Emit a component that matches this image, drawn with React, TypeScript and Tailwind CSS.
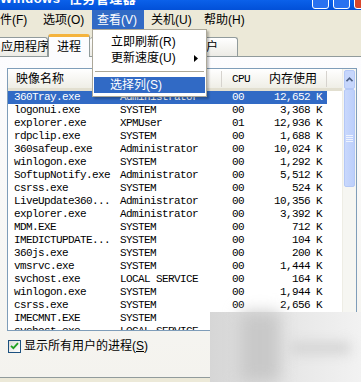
import React from 'react';

type Row = { name: string; user: string; cpu: string; mem: string };

const rows: Row[] = [
  { name: '360Tray.exe', user: 'Administrator', cpu: '00', mem: '12,652 K' },
  { name: 'logonui.exe', user: 'SYSTEM', cpu: '00', mem: '3,368 K' },
  { name: 'explorer.exe', user: 'XPMUser', cpu: '01', mem: '12,936 K' },
  { name: 'rdpclip.exe', user: 'SYSTEM', cpu: '00', mem: '1,688 K' },
  { name: '360safeup.exe', user: 'Administrator', cpu: '00', mem: '10,024 K' },
  { name: 'winlogon.exe', user: 'SYSTEM', cpu: '00', mem: '1,292 K' },
  { name: 'SoftupNotify.exe', user: 'Administrator', cpu: '00', mem: '5,512 K' },
  { name: 'csrss.exe', user: 'SYSTEM', cpu: '00', mem: '524 K' },
  { name: 'LiveUpdate360...', user: 'Administrator', cpu: '00', mem: '10,356 K' },
  { name: 'explorer.exe', user: 'Administrator', cpu: '00', mem: '3,392 K' },
  { name: 'MDM.EXE', user: 'SYSTEM', cpu: '00', mem: '712 K' },
  { name: 'IMEDICTUPDATE...', user: 'SYSTEM', cpu: '00', mem: '104 K' },
  { name: '360js.exe', user: 'SYSTEM', cpu: '00', mem: '200 K' },
  { name: 'vmsrvc.exe', user: 'SYSTEM', cpu: '00', mem: '1,444 K' },
  { name: 'svchost.exe', user: 'LOCAL SERVICE', cpu: '00', mem: '164 K' },
  { name: 'winlogon.exe', user: 'SYSTEM', cpu: '00', mem: '1,944 K' },
  { name: 'csrss.exe', user: 'SYSTEM', cpu: '00', mem: '2,656 K' },
  { name: 'IMECMNT.EXE', user: 'SYSTEM', cpu: '00', mem: '1,108 K' },
  { name: 'svchost.exe', user: 'LOCAL SERVICE', cpu: '00', mem: '3,204 K' },
];

const ui = "font-['Liberation_Sans','Noto_Sans_CJK_SC',sans-serif]";
const mono = "font-['Liberation_Mono','Noto_Sans_CJK_SC',monospace] text-[11px] tracking-[-0.6px]";

export default function App() {
  return (
    <div className={`relative w-[361px] h-[382px] overflow-hidden bg-[#ece9d8] text-[12px] text-black ${ui}`}>
      {/* title bar, only its lower edge is in frame */}
      <div className="h-[10px] overflow-hidden bg-gradient-to-b from-[#0b61ea] to-[#0250d8]">
        <div className="flex items-center justify-between h-[24px] -mt-[13px]">
          <span className="text-white font-bold text-[13px] tracking-[0.5px]">Windows&nbsp;&nbsp;任务管理器</span>
          <div className="flex gap-[4px] mr-[-10px]">
            <div className="w-[17px] h-[20px] rounded-[3px] border border-white bg-[#2a72f0]" />
            <div className="w-[17px] h-[20px] rounded-[3px] border border-white bg-[#2a72f0]" />
            <div className="w-[17px] h-[20px] rounded-[3px] border border-white bg-[#d9462a]" />
          </div>
        </div>
      </div>

      {/* menu bar */}
      <div className="flex h-[20px] items-center leading-[20px]">
        <div className="-ml-[17px] w-[55px] pl-[5px] whitespace-nowrap">文件(F)</div>
        <div className="w-[54px] pl-[5px] whitespace-nowrap">选项(O)</div>
        <div className="w-[52px] pl-[5px] whitespace-nowrap bg-[#316ac5] text-white">查看(V)</div>
        <div className="w-[53px] pl-[7px] whitespace-nowrap">关机(U)</div>
        <div className="w-[60px] pl-[7px] whitespace-nowrap">帮助(H)</div>
      </div>

      {/* tabs */}
      <div className="flex items-end h-[26px] relative">
        <div className="-ml-[4px] w-[52px] h-[19px] pl-[4px] leading-[18px] border border-b-0 border-[#919b9c] rounded-t-[3px] bg-gradient-to-b from-white to-[#ecebe5] whitespace-nowrap">应用程序</div>
        <div className="relative w-[42px] h-[23px] leading-[20px] text-center border border-b-0 border-[#919b9c] border-t-[3px] border-t-[#f4b33d] rounded-t-[3px] bg-[#fcfcfe] -mb-[1px]">进程</div>
        <div className="w-[47px] h-[19px] leading-[18px] text-center border border-b-0 border-l-0 border-[#919b9c] rounded-t-[3px] bg-gradient-to-b from-white to-[#ecebe5]">性能</div>
        <div className="w-[47px] h-[19px] leading-[18px] text-center border border-b-0 border-l-0 border-[#919b9c] rounded-t-[3px] bg-gradient-to-b from-white to-[#ecebe5]">联网</div>
        <div className="w-[54px] h-[19px] leading-[18px] pl-[10px] border border-b-0 border-l-0 border-[#919b9c] rounded-t-[3px] bg-gradient-to-b from-white to-[#ecebe5] whitespace-nowrap">用户</div>
      </div>

      {/* tab body */}
      <div className="h-[322px] border-t border-b border-[#919b9c] bg-gradient-to-b from-[#fcfcfe] to-[#f4f3ee] pt-[11px] pl-[7px] pr-[4px]">
        {/* list view */}
        <div className="flex h-[263px] border border-[#7f9db9] bg-white overflow-hidden">
          <div className="w-[335px] flex flex-col">
            <div className="flex h-[22px] shrink-0 items-center bg-gradient-to-b from-white to-[#efeee6] border-b-[3px] border-[#e2dfd0]">
              <div className="w-[106px] pl-[8px] border-r border-[#d6d3ce] h-[16px] leading-[16px]">映像名称</div>
              <div className="w-[108px] border-r border-[#d6d3ce] h-[16px]" />
              <div className="w-[40px] pl-[10px] h-[16px] leading-[16px] font-['Liberation_Mono',monospace] text-[11px] tracking-[-0.6px]">CPU</div>
              <div className="w-[65px] pr-[9px] text-right border-r border-[#d6d3ce] h-[16px] leading-[16px]">内存使用</div>
            </div>
            <div className="flex flex-col">
              {rows.map((r, i) => (
                <div
                  key={i}
                  className={`flex w-[319px] h-[13px] shrink-0 leading-[13px] whitespace-nowrap ${mono} ${i === 0 ? 'bg-[#316ac5] text-white' : ''}`}
                >
                  <div className="w-[106px] pl-[6px] overflow-hidden">{r.name}</div>
                  <div className="w-[108px] pl-[6px] overflow-hidden">{r.user}</div>
                  <div className="w-[40px] pl-[10px]">{r.cpu}</div>
                  <div className="w-[65px] pr-[5px] text-right">{r.mem}</div>
                </div>
              ))}
            </div>
          </div>
          {/* scrollbar */}
          <div className="w-[14px] flex flex-col bg-[#f6f6f2] border-l border-[#eeede5]">
            <div className="h-[19px] mx-[1px] mt-[1px] rounded-[2px] border border-[#b4c8f6] bg-[#c6d6fc] flex items-center justify-center">
              <svg width="7" height="5" viewBox="0 0 7 5"><path d="M0.5 4.2 L3.5 1.2 L6.5 4.2" fill="none" stroke="#4d6185" strokeWidth="1.6" /></svg>
            </div>
            <div className="h-[98px] mx-[1px] rounded-[2px] border border-[#b4c8f6] bg-gradient-to-r from-[#c9d8fc] to-[#bccffb] flex flex-col items-center justify-center gap-[1px]">
              <div className="w-[7px] h-px bg-[#eef3fe]" />
              <div className="w-[7px] h-px bg-[#eef3fe]" />
              <div className="w-[7px] h-px bg-[#eef3fe]" />
              <div className="w-[7px] h-px bg-[#eef3fe]" />
            </div>
          </div>
        </div>

        {/* checkbox */}
        <div className="flex items-center gap-[3px] mt-[7px] ml-[1px]">
          <div className="w-[13px] h-[13px] border border-[#1c5180] bg-gradient-to-br from-[#dcdcd7] to-white flex items-center justify-center">
            <svg width="9" height="8" viewBox="0 0 9 8"><path d="M1 3.8 L3.4 6.2 L8 1.2" fill="none" stroke="#21a121" strokeWidth="1.8" /></svg>
          </div>
          <span className="leading-[16px] whitespace-nowrap">显示所有用户的进程(<span className="underline">S</span>)</span>
        </div>
      </div>

      {/* view menu dropdown */}
      <div className="absolute z-20 left-[92px] top-[29px] w-[115px] h-[68px] bg-white border border-[#aca899] shadow-[2px_2px_2px_rgba(0,0,0,0.25)] pt-[4px] px-[1px]">
        <div className="h-[16px] leading-[16px] pl-[17px] whitespace-nowrap">立即刷新(R)</div>
        <div className="h-[16px] leading-[16px] pl-[17px] whitespace-nowrap flex items-center justify-between pr-[7px]">
          <span>更新速度(U)</span>
          <svg width="4" height="7" viewBox="0 0 4 7"><path d="M0 0 L4 3.5 L0 7 Z" fill="#000" /></svg>
        </div>
        <div className="h-[11px] flex items-center px-[1px]">
          <div className="h-px w-full bg-[#aca899]" />
        </div>
        <div className="h-[16px] leading-[16px] pl-[16px] whitespace-nowrap bg-[#316ac5] text-white">选择列(S)</div>
      </div>

      {/* blurred watermark */}
      <div className="absolute z-20 left-[210px] top-[312px] w-[151px] h-[70px] bg-gradient-to-r from-[#d6d6d6] via-[#e6e6e6] to-[#f2f2f2]">
        <div className="absolute left-[30px] top-0 w-[40px] h-[70px] bg-[#c8c8c8] blur-[8px]" />
        <div className="absolute left-[80px] top-[30px] w-[60px] h-[12px] bg-[#d4d4d4] blur-[6px]" />
      </div>
    </div>
  );
}
